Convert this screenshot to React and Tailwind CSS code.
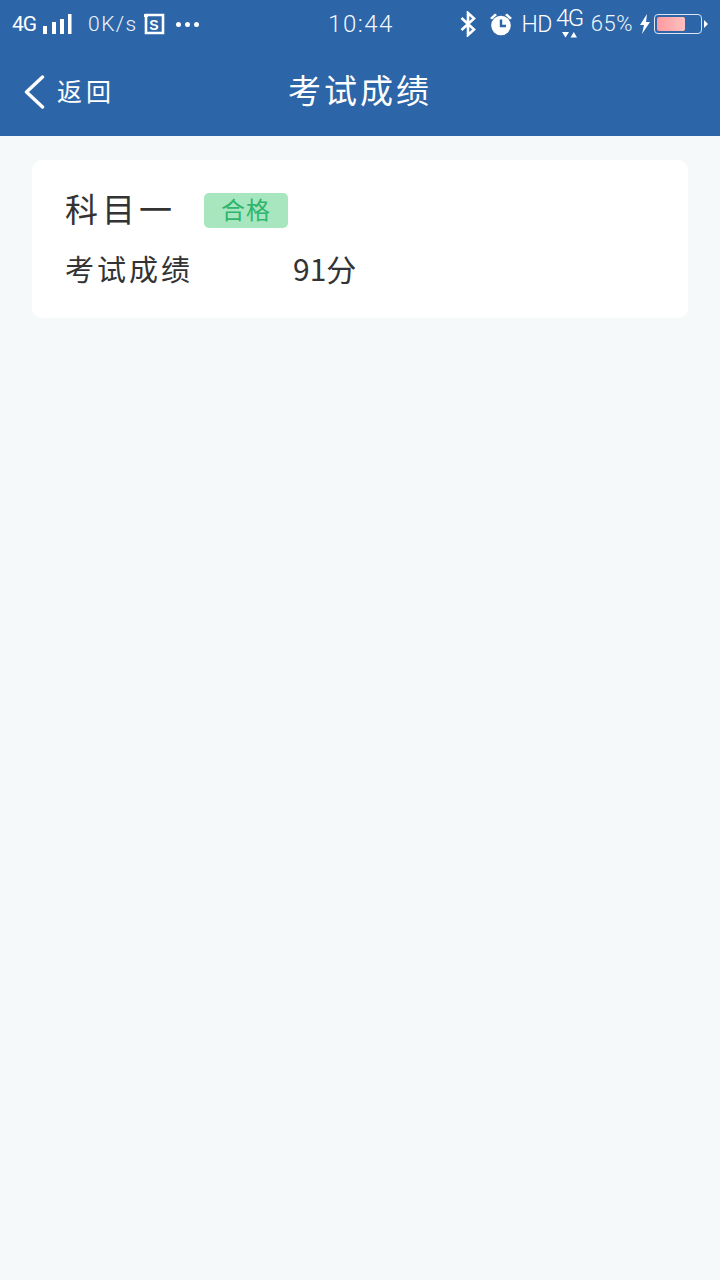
function Signal() {
  return (
    <svg width="29" height="21" viewBox="0 0 29 21" fill="#fff" className="block">
      <rect x="0" y="12" width="4" height="8" />
      <rect x="9" y="8" width="4" height="12" />
      <rect x="17" y="5" width="4" height="15" />
      <rect x="25" y="0" width="3.5" height="20" />
    </svg>
  );
}
function SBox() {
  return (
    <svg width="22" height="22" viewBox="0 0 22 22" className="block">
      <path d="M2 2 H20 V20 H3 V3" fill="none" stroke="#fff" strokeWidth="2.6" />
      <path d="M1 1 H5 V4 H1 Z" fill="#fff" />
      <text x="11" y="16.5" fontSize="14" fontWeight="700" textAnchor="middle" fill="#fff" fontFamily="Liberation Sans, sans-serif">S</text>
    </svg>
  );
}
function Bluetooth() {
  return (
    <svg width="16" height="26" viewBox="0 0 16 26" fill="none" stroke="#fff" strokeWidth="2.6" className="block">
      <path d="M1.5 7 L14 18.5 L8 24 V2 L14 7.5 L1.5 19" />
    </svg>
  );
}
function Alarm() {
  return (
    <svg width="24" height="24" viewBox="0 0 24 24" className="block">
      <circle cx="12" cy="13.5" r="9.8" fill="#fff" />
      <path d="M1 6 L6 1.5 L8 3 L3 7.5 Z M23 6 L18 1.5 L16 3 L21 7.5 Z" fill="#fff" />
      <path d="M12 7.5 V14 H17" fill="none" stroke="#2d65a9" strokeWidth="2.4" />
    </svg>
  );
}
function Bolt() {
  return (
    <svg width="12" height="20" viewBox="0 0 12 20" fill="#fff" className="block">
      <path d="M8 0 L1 11 H5 L3 20 L11 8 H7 Z" />
    </svg>
  );
}
function Battery() {
  return (
    <div className="flex items-center gap-[2px]">
      <div className="w-[48px] h-[20px] rounded-[4px] border border-[#dbe6f2] p-[2px]">
        <div className="h-full w-[28px] rounded-[2px] bg-gradient-to-r from-[#ff9a9f] to-[#ffc0c0]" />
      </div>
      <svg width="4" height="8" viewBox="0 0 4 8" fill="#fff" className="block">
        <path d="M0 0 L4 4 L0 8 Z" />
      </svg>
    </div>
  );
}
function Net4G() {
  return (
    <div className="flex flex-col items-center w-[25px] -mt-[4px]">
      <span className="text-[24px] leading-[22px] tracking-[-1.5px] text-white font-light font-['Roboto',sans-serif]">4G</span>
      <svg width="18" height="7" viewBox="0 0 18 7" fill="#fff" className="block mt-[2px]">
        <path d="M2 1 H9 L5.5 6.5 Z M10.5 6.5 H17 L13.8 1 Z" />
      </svg>
    </div>
  );
}
export default function App() {
  const cn = "font-['Noto_Sans_CJK_SC','Noto_Sans_CJK_JP',sans-serif]";
  return (
    <div className="w-[720px] h-[1280px] bg-[#f5f9fa] flex flex-col">
      <header className="bg-[#2d65a9] h-[136px] flex flex-col shrink-0">
        <div className="h-[48px] flex items-center pl-[12px] pr-[12px]">
          <div className="flex-1 flex items-center text-white font-['Roboto',sans-serif]">
            <span className="text-[21px] tracking-[-1px] leading-none font-normal">4G</span>
            <span className="ml-[7px]"><Signal /></span>
            <span className="ml-[16px] text-[21px] leading-none font-light tracking-[1.4px] text-[#f0f5fa]">0K/s</span>
            <span className="ml-[5px]"><SBox /></span>
            <span className="ml-[11px] flex gap-[4px]">
              <i className="block w-[5px] h-[5px] rounded-full bg-white" />
              <i className="block w-[5px] h-[5px] rounded-full bg-white" />
              <i className="block w-[5px] h-[5px] rounded-full bg-white" />
            </span>
          </div>
          <div className="text-[24px] leading-none font-light tracking-[1.5px] text-[#f4f8fc] font-['Roboto',sans-serif] translate-x-[1px]">10:44</div>
          <div className="flex-1 flex items-center justify-end text-white font-['Roboto',sans-serif]">
            <Bluetooth />
            <span className="ml-[13px]"><Alarm /></span>
            <span className="ml-[8px] text-[23px] leading-none font-light tracking-[-0.5px]">HD</span>
            <span className="ml-[5px]"><Net4G /></span>
            <span className="ml-[9px] text-[22px] leading-none font-light tracking-[0.5px] text-[#f0f5fa]">65%</span>
            <span className="ml-[6px]"><Bolt /></span>
            <span className="ml-[3px]"><Battery /></span>
          </div>
        </div>
        <div className="flex-1 relative flex items-center justify-center pb-[4px]">
          <div className="absolute left-[24px] top-[27px] flex items-center">
            <svg width="21" height="34" viewBox="0 0 21 34" fill="none" stroke="#fff" strokeWidth="3.4" strokeLinecap="round" strokeLinejoin="round" className="block">
              <path d="M18.5 2 L2.5 17 L18.5 32" />
            </svg>
            <span className={`ml-[12px] text-[25px] leading-none text-white tracking-[4px] -translate-y-[2px] ${cn}`}>返回</span>
          </div>
          <h1 className={`text-[33px] leading-none font-normal text-white tracking-[3px] -translate-y-[1px] ${cn}`}>考试成绩</h1>
        </div>
      </header>
      <main className="px-[32px] pt-[24px]">
        <section className="h-[158px] bg-white rounded-[10px] pl-[33px] pt-[31px]">
          <div className="flex items-center h-[35px]">
            <span className={`text-[33px] leading-none text-[#333] tracking-[4px] w-[139px] ${cn}`}>科目一</span>
            <span className={`w-[84px] h-[35px] rounded-[5px] bg-[#a8e6bf] text-[#2fb56e] text-[24px] leading-[31px] text-center tracking-[1px] translate-y-[2px] ${cn}`}>合格</span>
          </div>
          <div className="flex items-center mt-[25px]">
            <span className={`text-[29px] leading-[34px] text-[#333] tracking-[3px] w-[228px] ${cn}`}>考试成绩</span>
            <span className={`text-[30px] leading-[34px] text-[#333] ${cn}`}>91分</span>
          </div>
        </section>
      </main>
    </div>
  );
}
